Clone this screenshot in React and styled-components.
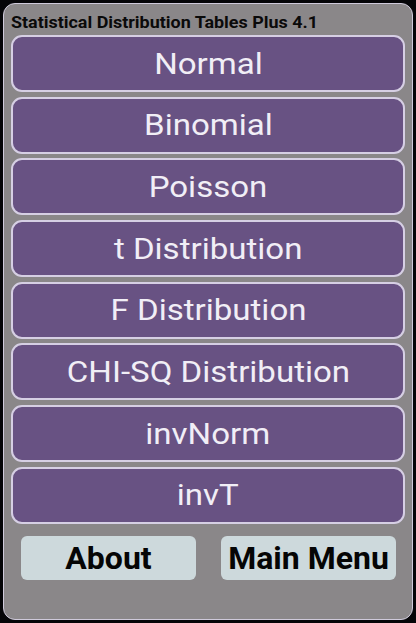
import React from "react";
import styled, { createGlobalStyle } from "styled-components";

const Global = createGlobalStyle`
  html, body { margin: 0; padding: 0; background: #000; }
  body { width: 416px; height: 623px; overflow: hidden; font-family: Roboto, "Liberation Sans", sans-serif; }
`;

const Screen = styled.div`
  width: 416px;
  height: 623px;
  background: #050508;
  padding: 3px;
  box-sizing: border-box;
`;

const Panel = styled.div`
  width: 410px;
  height: 617px;
  box-sizing: border-box;
  background: #8a8789;
  border: 1px solid #cfcadb;
  border-radius: 12px;
  padding: 5px 7px 0 7px;
  display: flex;
  flex-direction: column;
`;

const Title = styled.div`
  height: 26px;
  line-height: 28px;
  white-space: nowrap;
`;

const TitleText = styled.span`
  display: inline-block;
  font-family: Roboto, "Liberation Sans", sans-serif;
  font-weight: 700;
  font-size: 16px;
  color: #0a0a0a;
  transform: scaleX(1.12);
  transform-origin: left center;
`;

const List = styled.div`
  display: flex;
  flex-direction: column;
  gap: 4.7px;
`;

const DistButton = styled.div`
  height: 57px;
  box-sizing: border-box;
  background: #685283;
  border: 2px solid #d6cfe4;
  border-radius: 11px;
  display: flex;
  align-items: center;
  justify-content: center;
  white-space: nowrap;
`;

const Label = styled.span`
  display: inline-block;
  color: #f1eef6;
  font-family: Roboto, "Liberation Sans", sans-serif;
  font-size: 29.5px;
  font-weight: 400;
  transform: scaleX(1.12);
`;

const Footer = styled.div`
  display: flex;
  justify-content: space-between;
  padding: 12px 9px 0 10px;
`;

const NavButton = styled.div`
  width: 175px;
  height: 44px;
  background: #cdd9dc;
  border-radius: 6px;
  display: flex;
  align-items: center;
  justify-content: center;
  color: #050505;
  font-family: Roboto, "Liberation Sans", sans-serif;
  font-weight: 700;
  font-size: 32px;
  white-space: nowrap;
`;

const items = [
  "Normal",
  "Binomial",
  "Poisson",
  "t Distribution",
  "F Distribution",
  "CHI-SQ Distribution",
  "invNorm",
  "invT",
];

export default function App() {
  return (
    <>
      <Global />
      <Screen>
        <Panel>
          <Title>
            <TitleText>Statistical Distribution Tables Plus 4.1</TitleText>
          </Title>
          <List>
            {items.map((t) => (
              <DistButton key={t}>
                <Label>{t}</Label>
              </DistButton>
            ))}
          </List>
          <Footer>
            <NavButton>About</NavButton>
            <NavButton>Main Menu</NavButton>
          </Footer>
        </Panel>
      </Screen>
    </>
  );
}
